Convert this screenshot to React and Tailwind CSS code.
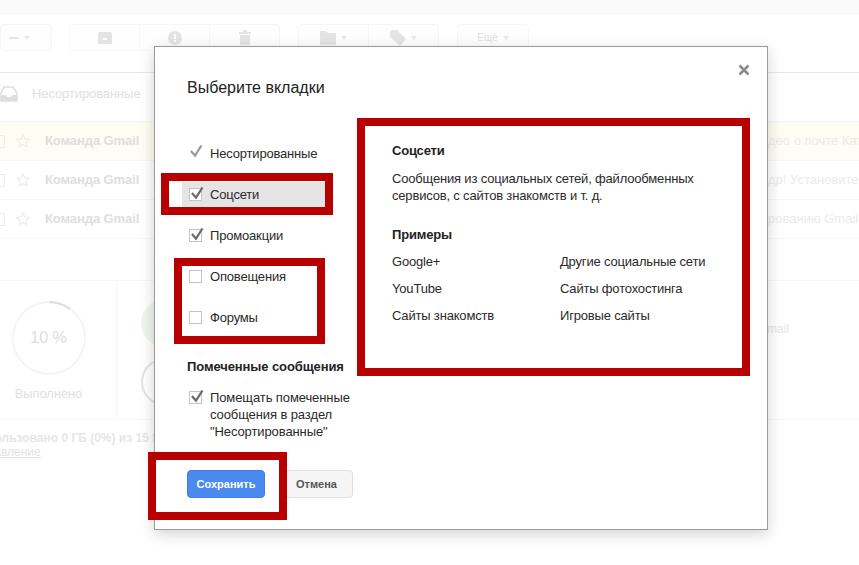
const RED = "absolute border-8 border-[#b80000]";

function Caret() {
  return <span className="inline-block w-0 h-0 border-x-[3px] border-x-transparent border-t-[4px] border-t-[#e8e8e8]" />;
}

function ToolBtn({ w = 71, children, first, last }) {
  return (
    <div
      style={{ width: w }}
      className={`h-[27px] flex items-center justify-center gap-[5px] border border-[#f6f6f6] bg-[#fefefe] ${first ? "rounded-l-sm" : "-ml-px"} ${last ? "rounded-r-sm" : ""}`}
    >
      {children}
    </div>
  );
}

function BgRow({ yellow, right }) {
  return (
    <div className={`h-[39px] flex items-center border-b border-[#f6f6f6] ${yellow ? "bg-[#fdfdf3]" : "bg-white"}`}>
      <div className="w-[9px] h-[13px] -ml-[4px] border border-[#eeeeee] shrink-0" />
      <svg width="16" height="16" viewBox="0 0 24 24" className="ml-[10px] shrink-0" fill="none" stroke="#eeeeee" strokeWidth="2">
        <path d="M12 3l2.8 5.9 6.4.8-4.7 4.4 1.2 6.4L12 17.4l-5.7 3.1 1.2-6.4-4.7-4.4 6.4-.8z" />
      </svg>
      <span className="ml-[14px] w-[723px] shrink-0 font-bold text-[13px] tracking-[-0.1px] text-[#dedede]">Команда Gmail</span>
      <span className="whitespace-nowrap text-[13px] text-[#ebebeb]">{right}</span>
    </div>
  );
}

function Check({ color = "#6b6b6b" }) {
  return (
    <svg width="14" height="13" viewBox="0 0 14 13" className="absolute left-[1px] -top-[2px]" fill="none">
      <path d="M0.9 6l4.1 4.6L11.5 0.5" stroke={color} strokeWidth="2.2" />
    </svg>
  );
}

function Box({ checked }) {
  return (
    <span className="relative block w-[13px] h-[13px] border border-[#c4c4c4] bg-white shrink-0">
      {checked && <Check />}
    </span>
  );
}

function Option({ label, checked, plain, active }) {
  return (
    <div className="h-[41px] flex items-center">
      <div className={`flex items-center h-[26px] -ml-[5px] pl-[7px] w-[151px] ${active ? "bg-[#e5e5e5]" : ""}`}>
        <span className="relative block w-[13px] h-[13px] shrink-0">
          {plain ? <Check color="#9a9a9a" /> : <Box checked={checked} />}
        </span>
        <span className="ml-[8px] text-[13px] tracking-[-0.18px] text-[#2a2a2a]">{label}</span>
      </div>
    </div>
  );
}

export default function App() {
  return (
    <div className="relative w-[859px] h-[565px] overflow-hidden bg-white" style={{ fontFamily: '"Liberation Sans", Arial, sans-serif' }}>
      {/* Faded Gmail page */}
      <div className="h-[15px] bg-[#fafafa]" />
      <div className="flex items-center mt-[9px] h-[27px]">
        <ToolBtn w={52} first last>
          <span className="-ml-[14px] w-[10px] h-[2px] bg-[#e6e6e6]" />
          <Caret />
        </ToolBtn>
        <div className="ml-[17px] flex">
          <ToolBtn first>
            <svg width="14" height="14" viewBox="0 0 14 14"><path d="M0 3l1-2h12l1 2v10H0z" fill="#e4e4e4" /><path d="M5 7h4v2H5z" fill="#fff" /></svg>
          </ToolBtn>
          <ToolBtn>
            <svg width="14" height="14" viewBox="0 0 14 14"><circle cx="7" cy="7" r="7" fill="#e4e4e4" /><path d="M6 3h2v5H6zM6 9h2v2H6z" fill="#fff" /></svg>
          </ToolBtn>
          <ToolBtn last>
            <svg width="12" height="15" viewBox="0 0 12 15"><path d="M0 2h4V0h4v2h4v2H0zM1 5h10v10H1z" fill="#e4e4e4" /></svg>
          </ToolBtn>
        </div>
        <div className="ml-[18px] flex">
          <ToolBtn first>
            <svg width="16" height="14" viewBox="0 0 16 14"><path d="M0 0h6l2 2h8v12H0z" fill="#e4e4e4" /></svg>
            <Caret />
          </ToolBtn>
          <ToolBtn last>
            <svg width="16" height="16" viewBox="0 0 16 16"><path d="M0 2l2-2h5l9 9-6 7-10-9z" fill="#e4e4e4" /></svg>
            <Caret />
          </ToolBtn>
        </div>
        <div className="ml-[18px]">
          <ToolBtn w={72} first last>
            <span className="text-[10px] text-[#e0e0e0]">Ещё</span>
            <Caret />
          </ToolBtn>
        </div>
      </div>
      <div className="mt-[21px] h-[1px] bg-[#e8e8e8]" />
      <div className="h-[49px] pb-[7px] flex items-center border-b border-[#f4f4f4]">
        <svg width="18" height="16" viewBox="0 0 18 16" className="shrink-0" fill="none">
          <path d="M1 7l3-6h9l4 6v8H1z" stroke="#dedede" strokeWidth="1.6" />
          <path d="M1 9h5l1 2h4l1-2h5v6H1z" fill="#dedede" />
        </svg>
        <span className="ml-[14px] text-[13px] tracking-[-0.1px] text-[#e0e0e0]">Несортированные</span>
      </div>
      <BgRow yellow right="део о почте Кат" />
      <BgRow right="др! Установите" />
      <BgRow right="рованию Gmail" />
      <div className="mt-[41px] h-[140px] flex border-y border-[#f7f7f7]">
        <div className="w-[117px] border-r border-[#f5f5f5] flex flex-col items-center pr-[19px] shrink-0">
          <div className="relative mt-[20px] w-[74px] h-[74px]">
            <svg width="74" height="74" viewBox="0 0 74 74" className="absolute inset-0" fill="none">
              <circle cx="37" cy="37" r="36" stroke="#f5f5f5" strokeWidth="2" />
              <path d="M37 1a36 36 0 0 1 21 7" stroke="#dcdcdc" strokeWidth="2" />
            </svg>
            <div className="absolute inset-0 flex items-center justify-center text-[16px] text-[#dedede]">10 %</div>
          </div>
          <div className="mt-[9px] text-[13px] tracking-[-0.1px] text-[#e0e0e0]">Выполнено</div>
        </div>
        <div className="flex flex-col ml-[24px]">
          <div className="mt-[18px] w-[48px] h-[48px] rounded-full bg-[#eef6ec]" />
          <div className="mt-[11px] w-[48px] h-[48px] rounded-full border-2 border-[#e4e4e4]" />
        </div>
        <span className="ml-[578px] mt-[39px] text-[12px] text-[#e6e6e6]">mail</span>
      </div>
      <div className="mt-[12px] -ml-[28px] font-bold text-[12px] leading-[13px] text-[#e6e6e6] whitespace-nowrap">Использовано 0 ГБ (0%) из 15 ГБ</div>
      <div className="-ml-[26px] text-[12px] leading-[14px] text-[#e2e2e2] underline">Управление</div>

      {/* Dialog */}
      <div className="absolute left-[154px] top-[46px] w-[614px] h-[484px] bg-white border border-[#9a9a9a] shadow-[0_4px_14px_rgba(0,0,0,0.18)] pt-[31px] pl-[32px]">
        <svg width="12" height="12" viewBox="0 0 12 12" className="absolute right-[17px] top-[17px]">
          <path d="M1.5 1.5l9 9M10.5 1.5l-9 9" stroke="#8a8a8a" strokeWidth="2.6" />
        </svg>
        <div className="text-[16px] leading-[20px] text-[#222222]">Выберите вкладки</div>
        <div className="flex mt-[35px]">
          <div className="w-[205px] shrink-0">
            <Option label="Несортированные" plain />
            <Option label="Соцсети" checked active />
            <Option label="Промоакции" checked />
            <Option label="Оповещения" />
            <Option label="Форумы" />
            <div className="mt-[20px] font-bold text-[13px] tracking-[-0.1px] leading-[17px] text-[#222222] whitespace-nowrap">Помеченные сообщения</div>
            <div className="mt-[14px] flex">
              <span className="ml-[2px] mt-[2px]"><Box checked /></span>
              <div className="ml-[8px] text-[13px] tracking-[-0.1px] leading-[17px] text-[#2a2a2a] whitespace-nowrap">
                Помещать помеченные<br />сообщения в раздел<br />"Несортированные"
              </div>
            </div>
          </div>
          <div className="pt-[9px] w-[340px] text-[13px] tracking-[-0.18px] text-[#2a2a2a]">
            <div className="font-bold leading-[17px] text-[#222222]">Соцсети</div>
            <div className="mt-[11px] leading-[17px]">Сообщения из социальных сетей, файлообменных<br />сервисов, с сайтов знакомств и т. д.</div>
            <div className="mt-[22px] font-bold leading-[17px] text-[#222222]">Примеры</div>
            <div className="mt-[10px] grid grid-cols-[168px_1fr] gap-y-[10px] leading-[17px]">
              <div>Google+</div><div>Другие социальные сети</div>
              <div>YouTube</div><div>Сайты фотохостинга</div>
              <div>Сайты знакомств</div><div>Игровые сайты</div>
            </div>
          </div>
        </div>
        <div className="flex gap-[15px] mt-[30px]">
          <div className="w-[78px] h-[28px] rounded-sm bg-[#4a8af0] border border-[#3f7fe6] flex items-center justify-center text-[11px] font-bold text-white">Сохранить</div>
          <div className="w-[73px] h-[28px] rounded-sm bg-[#f5f5f5] border border-[#e0e0e0] flex items-center justify-center text-[11px] font-bold text-[#555555]">Отмена</div>
        </div>
      </div>

      {/* Red annotation frames */}
      <div className={`${RED} left-[161px] top-[173px] w-[172px] h-[42px]`} />
      <div className={`${RED} left-[174px] top-[258px] w-[151px] h-[86px]`} />
      <div className={`${RED} left-[148px] top-[452px] w-[139px] h-[68px]`} />
      <div className={`${RED} left-[357px] top-[118px] w-[393px] h-[258px]`} />
    </div>
  );
}
